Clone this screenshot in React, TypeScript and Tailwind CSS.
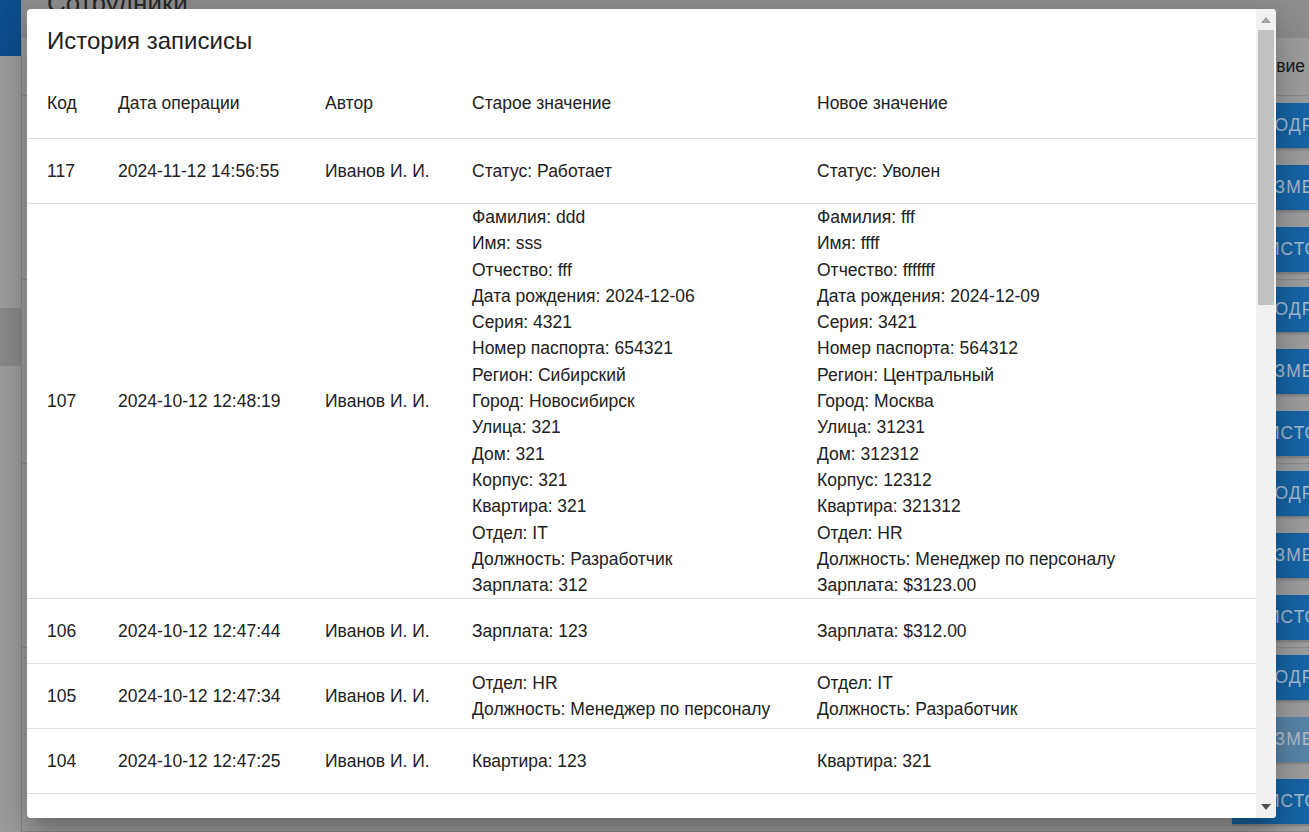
import React from "react";

type Entry = {
  id: number;
  date: string;
  author: string;
  before: string[];
  after: string[];
};

const entries: Entry[] = [
  {
    id: 117,
    date: "2024-11-12 14:56:55",
    author: "Иванов И. И.",
    before: ["Статус: Работает"],
    after: ["Статус: Уволен"],
  },
  {
    id: 107,
    date: "2024-10-12 12:48:19",
    author: "Иванов И. И.",
    before: [
      "Фамилия: ddd",
      "Имя: sss",
      "Отчество: fff",
      "Дата рождения: 2024-12-06",
      "Серия: 4321",
      "Номер паспорта: 654321",
      "Регион: Сибирский",
      "Город: Новосибирск",
      "Улица: 321",
      "Дом: 321",
      "Корпус: 321",
      "Квартира: 321",
      "Отдел: IT",
      "Должность: Разработчик",
      "Зарплата: 312",
    ],
    after: [
      "Фамилия: fff",
      "Имя: ffff",
      "Отчество: fffffff",
      "Дата рождения: 2024-12-09",
      "Серия: 3421",
      "Номер паспорта: 564312",
      "Регион: Центральный",
      "Город: Москва",
      "Улица: 31231",
      "Дом: 312312",
      "Корпус: 12312",
      "Квартира: 321312",
      "Отдел: HR",
      "Должность: Менеджер по персоналу",
      "Зарплата: $3123.00",
    ],
  },
  {
    id: 106,
    date: "2024-10-12 12:47:44",
    author: "Иванов И. И.",
    before: ["Зарплата: 123"],
    after: ["Зарплата: $312.00"],
  },
  {
    id: 105,
    date: "2024-10-12 12:47:34",
    author: "Иванов И. И.",
    before: ["Отдел: HR", "Должность: Менеджер по персоналу"],
    after: ["Отдел: IT", "Должность: Разработчик"],
  },
  {
    id: 104,
    date: "2024-10-12 12:47:25",
    author: "Иванов И. И.",
    before: ["Квартира: 123"],
    after: ["Квартира: 321"],
  },
  {
    id: 103,
    date: "2024-10-12 12:47:10",
    author: "Иванов И. И.",
    before: ["Дом: 12"],
    after: ["Дом: 321"],
  },
];

const cols = "grid grid-cols-[71px_207px_147px_345px_1fr]";

function Lines({ items }: { items: string[] }) {
  return (
    <div className="pl-5 leading-[26.3px]">
      {items.map((t, i) => (
        <div key={i}>{t}</div>
      ))}
    </div>
  );
}

function ActionButton({ label, muted, wide }: { label: string; muted?: boolean; wide?: boolean }) {
  return (
    <button
      className={
        "h-[45px] w-full whitespace-nowrap text-left text-[17.5px] uppercase tracking-[1px] shadow-[0_2px_2px_rgba(0,0,0,0.18)] " +
        (wide ? "pl-[35px] " : "pl-[29px] ") +
        (muted ? "bg-[#5a86ab] text-[#b4c2cf]" : "bg-[#1766a8] text-[#a9bfd4]")
      }
    >
      {label}
    </button>
  );
}

function EmployeeRow({ mutedEdit }: { mutedEdit?: boolean }) {
  return (
    <div className="flex border-b border-[#8d8d8d]">
      <div className="flex-1" />
      <div className="flex w-[150px] shrink-0 flex-col gap-[17px] py-[7px]">
        <ActionButton label="Подробнее" />
        <ActionButton label="Изменить" muted={mutedEdit} />
        <ActionButton label="История" wide />
      </div>
    </div>
  );
}

function Arrow({ up, color }: { up?: boolean; color: string }) {
  return (
    <svg width="10" height="6" viewBox="0 0 10 6">
      <path d={up ? "M0 6 L5 0 L10 6 Z" : "M0 0 L10 0 L5 6 Z"} fill={color} />
    </svg>
  );
}

export default function App() {
  return (
    <div className="relative h-[832px] w-[1309px] overflow-hidden bg-[#a0a0a0] font-['Liberation_Sans',Arial,sans-serif]">
      {/* page behind the dialog */}
      <div className="flex h-full">
        <aside className="flex w-[22px] shrink-0 flex-col border-r border-[#8a8a8a]">
          <div className="h-[56px] bg-[#0e4f90]" />
          <div className="h-[252px]" />
          <div className="h-[58px] bg-[#8d8d8d]" />
        </aside>
        <main className="flex w-[1360px] shrink-0 flex-col">
          <header className="h-[45px] bg-[#8f8f8f] pl-[25px]">
            <h1 className="-mt-[13px] text-[26px] leading-8 text-[#262626]">Сотрудники</h1>
          </header>
          <div className="flex h-[68px] items-center border-b border-[#8d8d8d]">
            <div className="flex-1" />
            <div className="-ml-[4px] w-[154px] shrink-0 text-[17.5px] text-[#171717]">Действие</div>
          </div>
          <EmployeeRow />
          <EmployeeRow />
          <EmployeeRow />
          <EmployeeRow mutedEdit />
        </main>
      </div>

      {/* dialog */}
      <div className="absolute left-[27px] top-[9px] flex h-[809px] w-[1249px] overflow-hidden rounded bg-white text-[17.5px] text-[#212121] shadow-[0_11px_15px_-7px_rgba(0,0,0,0.2),0_24px_38px_3px_rgba(0,0,0,0.14),0_9px_46px_8px_rgba(0,0,0,0.12)]">
        <div className="min-w-0 flex-1 overflow-hidden">
          <h2 className="px-5 pb-[18px] pt-4 text-2xl leading-8">История записисы</h2>
          <div className={cols + " border-b border-[#e0e0e0] pb-[23px] pt-4 leading-6"}>
            <div className="pl-5">Код</div>
            <div className="pl-5">Дата операции</div>
            <div className="pl-5">Автор</div>
            <div className="pl-5">Старое значение</div>
            <div className="pl-5">Новое значение</div>
          </div>
          {entries.map((e) => (
            <div key={e.id} className={cols + " min-h-[65px] items-center border-b border-[#e0e0e0]"}>
              <div className="pl-5">{e.id}</div>
              <div className="pl-5">{e.date}</div>
              <div className="pl-5">{e.author}</div>
              <Lines items={e.before} />
              <Lines items={e.after} />
            </div>
          ))}
        </div>
        <div className="flex w-[20px] shrink-0 flex-col bg-[#f1f1f1]">
          <div className="flex h-[21px] items-center justify-center">
            <Arrow up color="#a3a3a3" />
          </div>
          <div className="mx-[2px] h-[275px] bg-[#c1c1c1]" />
          <div className="flex-1" />
          <div className="flex h-[22px] items-center justify-center">
            <Arrow color="#505050" />
          </div>
        </div>
      </div>
    </div>
  );
}
